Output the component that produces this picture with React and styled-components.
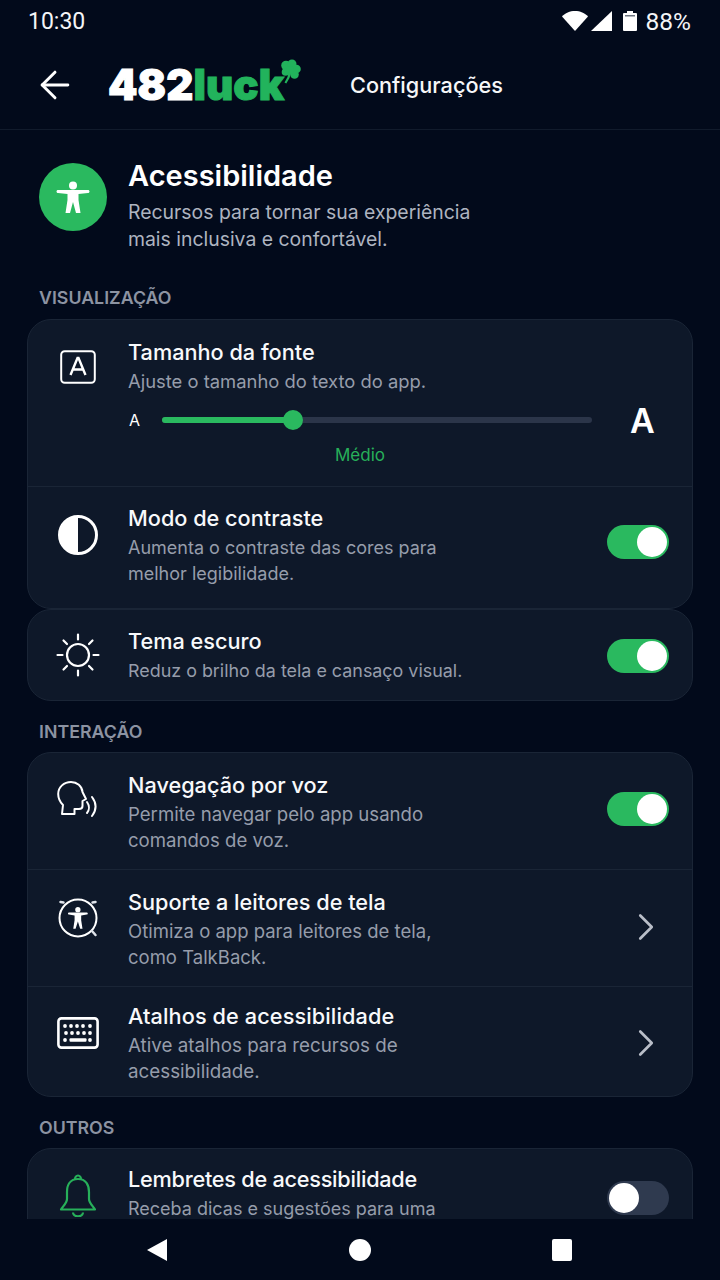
import React from 'react';
import styled, { createGlobalStyle } from 'styled-components';
import { ArrowLeft, ChevronRight } from 'lucide-react';

const GlobalStyle = createGlobalStyle`
  * { box-sizing: border-box; }
  html, body { margin: 0; padding: 0; background: #020817; }
  body { font-family: Inter, "Noto Sans", sans-serif; }
`;

const Screen = styled.div`
  width: 720px;
  height: 1280px;
  background: #020a1b;
  display: flex;
  flex-direction: column;
  overflow: hidden;
  color: #fff;
`;

const StatusBar = styled.div`
  height: 42px;
  flex: none;
  display: flex;
  align-items: center;
  justify-content: space-between;
  padding: 0 29px 0 28px;
  font-family: Roboto, sans-serif;
  font-size: 23px;
  color: #f4f5f7;
`;

const StatusIcons = styled.div`
  display: flex;
  align-items: center;
  gap: 3px;
`;

const Percent = styled.span`
  margin-left: 6px;
  font-size: 24.5px;
`;

const Battery = styled.svg`
  margin-left: 8px;
`;

const AppBar = styled.header`
  height: 88px;
  flex: none;
  display: flex;
  align-items: center;
  padding: 0 0 2px 33px;
  border-bottom: 1px solid #111b2c;
`;

const Logo = styled.div`
  display: flex;
  align-items: flex-start;
  margin-left: 31px;
  width: 242px;
  font-family: Inter, sans-serif;
  font-weight: 900;
  font-size: 42px;
  line-height: 46px;
  letter-spacing: 0.1px;
  color: #fff;
  -webkit-text-stroke: 1px currentColor;
`;

const LogoGreen = styled.span`
  color: #22b35c;
`;

const Clover = styled.svg`
  width: 22px;
  height: 25px;
  margin: -3px 0 0 -5px;
  flex: none;
`;

const AppBarTitle = styled.div`
  font-size: 21.7px;
  font-weight: 500;
  color: #f6f7f9;
`;

const Content = styled.main`
  flex: 1;
  min-height: 0;
  overflow: hidden;
  padding: 33px 27px 0;
`;

const Intro = styled.section`
  display: flex;
  gap: 21px;
  padding-left: 12px;
`;

const IntroBadge = styled.div`
  width: 68px;
  height: 68px;
  flex: none;
  border-radius: 50%;
  background: #2ab95f;
  display: flex;
  align-items: center;
  justify-content: center;
`;

const IntroTitle = styled.h1`
  margin: -4px 0 0;
  font-size: 29px;
  line-height: 34px;
  font-weight: 600;
`;

const IntroText = styled.p`
  margin: 6px 0 0;
  font-size: 19.4px;
  line-height: 26.5px;
  color: #aeb4c0;
`;

const SectionLabel = styled.h2`
  margin: ${(p) => p.$top}px 0 ${(p) => p.$bottom || 10}px 12px;
  font-size: 17.8px;
  line-height: 21px;
  font-weight: 600;
  color: #8c93a2;
`;

const Card = styled.section`
  background: #0e1829;
  border: 1px solid #1a2536;
  border-radius: 24px;
  overflow: hidden;
`;

const Row = styled.div`
  height: ${(p) => p.$height}px;
  display: grid;
  grid-template-columns: 100px 1fr auto;
  padding-right: 23px;
  & + & {
    border-top: 1px solid #1a2536;
  }
`;

const IconSlot = styled.div`
  display: flex;
  justify-content: center;
  padding-top: ${(p) => p.$top}px;
`;

const RowBody = styled.div`
  padding-top: ${(p) => p.$top}px;
`;

const RowTitle = styled.div`
  font-size: 21.7px;
  line-height: 28px;
  font-weight: 500;
  letter-spacing: ${(p) => p.$spacing || 0}px;
  color: #f8f9fb;
`;

const RowText = styled.div`
  margin-top: ${(p) => p.$gap ?? 3}px;
  font-size: ${(p) => p.$size || 18}px;
  line-height: 26px;
  color: #969dab;
  max-width: 342px;
`;

const Trailing = styled.div`
  display: flex;
  align-items: flex-start;
  padding-top: ${(p) => p.$top}px;
`;

const Switch = styled.div`
  width: 62px;
  height: 34px;
  border-radius: 17px;
  background: ${(p) => (p.$on ? '#2ab95f' : '#2f3a4f')};
  display: flex;
  align-items: center;
  justify-content: ${(p) => (p.$on ? 'flex-end' : 'flex-start')};
  padding: 0 2px;
`;

const Knob = styled.div`
  width: 30px;
  height: 30px;
  border-radius: 50%;
  background: #fff;
`;

const FontRow = styled.div`
  display: grid;
  grid-template-columns: 100px 1fr;
  height: 167px;
  border-bottom: 1px solid #1a2536;
`;

const SliderLine = styled.div`
  display: flex;
  align-items: center;
  margin-top: 9px;
  height: 34px;
`;

const SmallA = styled.span`
  width: 34px;
  padding-left: 1px;
  font-size: 16px;
  font-weight: 400;
`;

const BigA = styled.span`
  margin-left: 38px;
  font-size: 34px;
  font-weight: 600;
`;

const Track = styled.div`
  position: relative;
  width: 430px;
  height: 6px;
  border-radius: 3px;
  background: #2b3549;
`;

const TrackFill = styled.div`
  height: 100%;
  border-radius: 3px;
  background: #2ab95f;
`;

const Thumb = styled.div`
  position: absolute;
  top: -7px;
  left: 121px;
  width: 20px;
  height: 20px;
  border-radius: 50%;
  background: #2ab95f;
`;

const SliderValue = styled.div`
  width: 464px;
  margin-top: 8px;
  text-align: center;
  font-size: 17px;
  line-height: 20px;
  color: #27b05a;
`;

const NavBar = styled.nav`
  height: 61px;
  flex: none;
  background: #020a1b;
  display: flex;
  align-items: center;
  justify-content: center;
  gap: 181px;
  padding-right: 2px;
`;

const NavHome = styled.div`
  width: 22px;
  height: 22px;
  border-radius: 50%;
  background: #fff;
`;

const NavRecent = styled.div`
  width: 20px;
  height: 22px;
  border-radius: 2px;
  background: #fff;
`;

const Person = ({ size, color }) => (
  <svg width={size} height={size} viewBox="0 0 36 36" fill={color}>
    <circle cx="18" cy="6.5" r="4" />
    <path d="M1.500 12.500c0-.9.6-1.500 1.500-1.500h30c.9 0 1.500.6 1.500 1.500s-.6 1.500-1.500 1.500L23.500 15v6l2 13h-4.500L18 23l-3 11h-4.500l2-13v-6L3 14c-.9 0-1.500-.6-1.500-1.500z" />
  </svg>
);

const FontIcon = () => (
  <svg width="36" height="34" viewBox="0 0 36 34" fill="none" stroke="#fff">
    <rect x="1.200" y="1.200" width="33.600" height="31.600" rx="3.500" strokeWidth="2" />
    <path d="M10.500 25 17.500 8h1l7 17M13 19.500h10" strokeWidth="2.400" />
  </svg>
);

const ContrastIcon = () => (
  <svg width="40" height="40" viewBox="0 0 40 40">
    <circle cx="20" cy="20" r="18.500" fill="none" stroke="#fff" strokeWidth="3" />
    <path d="M20 1.500a18.500 18.500 0 0 0 0 37z" fill="#fff" />
  </svg>
);

const SunIcon = () => (
  <svg width="44" height="44" viewBox="0 0 44 44" fill="none" stroke="#fff" strokeWidth="2.200" strokeLinecap="round">
    <circle cx="22" cy="22" r="11" />
    <path d="M22 1.500v5M22 37.500v5M1.500 22h5M37.500 22h5M7.500 7.500l3.500 3.500M33 33l3.500 3.500M7.500 36.500l3.500-3.500M33 11l3.500-3.500" />
  </svg>
);

const VoiceIcon = () => (
  <svg width="42" height="38" viewBox="0 0 42 38" fill="none" stroke="#fff" strokeWidth="2" strokeLinecap="round" strokeLinejoin="round">
    <path d="M5 33 6 24C2.500 20.500 1.200 16.500 1.200 13 1.200 6 7 1 14 1c6 0 11 4 11.500 10L29 18l-3.500 2v5c0 2-1.500 3-3.500 3h-4.500v5z" />
    <path d="M30 21c2.500 3.500 2.500 8 0 11" />
    <path d="M35 16c4.500 6 4.500 13 0 19" />
  </svg>
);

const ReaderIcon = () => (
  <svg width="42" height="42" viewBox="0 0 42 42" fill="none">
    <circle cx="21" cy="21" r="18.500" stroke="#fff" strokeWidth="2" />
    <path d="M3.500 5l3 .5M38.500 5l-3 .5M35 34l3.500 4" stroke="#dfe3ea" strokeWidth="2.500" strokeLinecap="round" />
    <g transform="translate(9 10) scale(.66)">
      <circle cx="18" cy="4" r="4" fill="#fff" />
      <path d="M3 10c0-.9.600-1.500 1.500-1.500h27c.9 0 1.500.6 1.500 1.500s-.6 1.500-1.500 1.500L23 13v7l2 13h-3.500L18 22l-3.500 11H11l2-13v-7l-8.500-1.500C3.600 11.500 3 10.900 3 10z" fill="#fff" />
    </g>
  </svg>
);

const KeyboardIcon = () => (
  <svg width="42" height="32" viewBox="0 0 42 32" fill="#fff">
    <rect x="1.400" y="1.400" width="39.200" height="29.200" rx="3" fill="none" stroke="#fff" strokeWidth="2.600" />
    {[8, 14, 20, 26, 33].map((x) => <circle key={x} cx={x} cy="9" r="1.900" />)}
    {[9, 15, 21, 27, 33].map((x) => <circle key={x} cx={x} cy="16" r="1.900" />)}
    <circle cx="8" cy="23" r="1.900" />
    <rect x="12.500" y="21.300" width="17" height="3.400" rx="1" />
    <circle cx="33" cy="23" r="1.900" />
  </svg>
);

const BellIcon = () => (
  <svg width="38" height="44" viewBox="0 0 38 44" fill="none" stroke="#27b05a" strokeWidth="2.200" strokeLinejoin="round">
    <path d="M16 6.500c0-2 1.300-4 3-4s3 2 3 4" />
    <path d="M19 6C11 6 8 12 8 19v7c0 4-4 7-6 10.500h34C34 33 30 30 30 26v-7c0-7-3-13-11-13z" />
    <path d="M14 39.500c.5 5 9.500 5 10 0" />
  </svg>
);

const Toggle = ({ on }) => (
  <Switch $on={on}>
    <Knob />
  </Switch>
);

const App = () => {
  return (
    <Screen>
      <GlobalStyle />
      <StatusBar>
        <span>10:30</span>
        <StatusIcons>
          <svg width="26" height="20" viewBox="0 0 26 20" fill="#fff">
            <path d="M0 5.500C3 2 8 0 13 0s10 2 13 5.500L13 20z" />
          </svg>
          <svg width="21" height="20" viewBox="0 0 21 20" fill="#fff">
            <path d="M21 0v20H0z" />
          </svg>
          <Battery width="14" height="20" viewBox="0 0 14 20" fill="#fff">
            <path d="M4 0h6v2h3a1 1 0 0 1 1 1v16a1 1 0 0 1-1 1H1a1 1 0 0 1-1-1V3a1 1 0 0 1 1-1h3z" />
            <rect x="2" y="4" width="10" height="1.500" fill="#6d7480" />
          </Battery>
          <Percent>88%</Percent>
        </StatusIcons>
      </StatusBar>
      <AppBar>
        <ArrowLeft size={44} color="#fff" strokeWidth={1.600} />
        <Logo>
          <span>482<LogoGreen>luck</LogoGreen></span>
          <Clover viewBox="0 0 22 25" fill="#22b35c">
            <circle cx="7" cy="6.500" r="4.800" />
            <circle cx="13" cy="5" r="4.500" />
            <circle cx="17.500" cy="10" r="4.300" />
            <circle cx="15.500" cy="15.500" r="4.300" />
            <circle cx="6.500" cy="13" r="3.800" />
            <circle cx="11" cy="11" r="4" />
            <path d="M9.500 13 8.500 18 5.500 23.500l1.800 1L10.500 19l1.500-5z" />
          </Clover>
        </Logo>
        <AppBarTitle>Configurações</AppBarTitle>
      </AppBar>
      <Content>
        <Intro>
          <IntroBadge>
            <Person size={36} color="#fff" />
          </IntroBadge>
          <div>
            <IntroTitle>Acessibilidade</IntroTitle>
            <IntroText>Recursos para tornar sua experiência<br />mais inclusiva e confortável.</IntroText>
          </div>
        </Intro>

        <SectionLabel $top={35} $bottom={11}>VISUALIZAÇÃO</SectionLabel>
        <Card>
          <FontRow>
            <IconSlot $top={30}>
              <FontIcon />
            </IconSlot>
            <RowBody $top={18}>
              <RowTitle>Tamanho da fonte</RowTitle>
              <RowText $size={18.4} $gap={2}>Ajuste o tamanho do texto do app.</RowText>
              <SliderLine>
                <SmallA>A</SmallA>
                <Track>
                  <TrackFill style={{ width: '30%' }} />
                  <Thumb />
                </Track>
                <BigA>A</BigA>
              </SliderLine>
              <SliderValue>Médio</SliderValue>
            </RowBody>
          </FontRow>
          <Row $height={121}>
            <IconSlot $top={28}>
              <ContrastIcon />
            </IconSlot>
            <RowBody $top={17}>
              <RowTitle>Modo de contraste</RowTitle>
              <RowText>Aumenta o contraste das cores para melhor legibilidade.</RowText>
            </RowBody>
            <Trailing $top={38}>
              <Toggle on />
            </Trailing>
          </Row>
        </Card>
        <Card>
          <Row $height={90}>
            <IconSlot $top={23}>
              <SunIcon />
            </IconSlot>
            <RowBody $top={17}>
              <RowTitle>Tema escuro</RowTitle>
              <RowText $size={17.9}>Reduz o brilho da tela e cansaço visual.</RowText>
            </RowBody>
            <Trailing $top={29}>
              <Toggle on />
            </Trailing>
          </Row>
        </Card>

        <SectionLabel $top={20}>INTERAÇÃO</SectionLabel>
        <Card>
          <Row $height={116}>
            <IconSlot $top={28}>
              <VoiceIcon />
            </IconSlot>
            <RowBody $top={18}>
              <RowTitle>Navegação por voz</RowTitle>
              <RowText $size={18.6} $gap={2}>Permite navegar pelo app usando comandos de voz.</RowText>
            </RowBody>
            <Trailing $top={39}>
              <Toggle on />
            </Trailing>
          </Row>
          <Row $height={117}>
            <IconSlot $top={27}>
              <ReaderIcon />
            </IconSlot>
            <RowBody $top={18}>
              <RowTitle>Suporte a leitores de tela</RowTitle>
              <RowText $size={18.5} $gap={2}>Otimiza o app para leitores de tela, como TalkBack.</RowText>
            </RowBody>
            <Trailing $top={34}>
              <ChevronRight size={46} color="#b9bec8" strokeWidth={1.400} />
            </Trailing>
          </Row>
          <Row $height={110}>
            <IconSlot $top={30}>
              <KeyboardIcon />
            </IconSlot>
            <RowBody $top={15}>
              <RowTitle $spacing={0.1}>Atalhos de acessibilidade</RowTitle>
              <RowText $size={18.8}>Ative atalhos para recursos de acessibilidade.</RowText>
            </RowBody>
            <Trailing $top={33}>
              <ChevronRight size={46} color="#b9bec8" strokeWidth={1.400} />
            </Trailing>
          </Row>
        </Card>

        <SectionLabel $top={20}>OUTROS</SectionLabel>
        <Card>
          <Row $height={117}>
            <IconSlot $top={24}>
              <BellIcon />
            </IconSlot>
            <RowBody $top={16}>
              <RowTitle $spacing={-0.25}>Lembretes de acessibilidade</RowTitle>
              <RowText>Receba dicas e sugestões para uma melhor experiência.</RowText>
            </RowBody>
            <Trailing $top={32}>
              <Toggle />
            </Trailing>
          </Row>
        </Card>
      </Content>
      <NavBar>
        <svg width="22" height="22" viewBox="0 0 22 22" fill="#fff">
          <path d="M21 0v22L1 11z" />
        </svg>
        <NavHome />
        <NavRecent />
      </NavBar>
    </Screen>
  );
};

export default App;
